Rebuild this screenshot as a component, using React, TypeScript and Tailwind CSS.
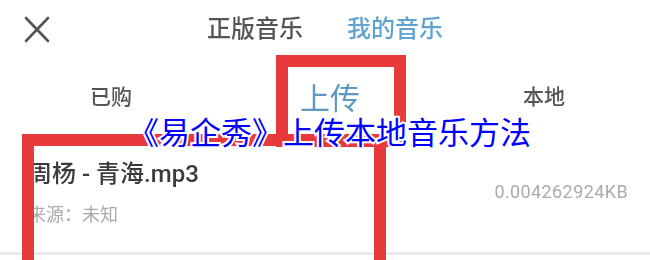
const sans = "font-['Roboto','Noto_Sans_CJK_SC',sans-serif]";

export default function App() {
  return (
    <div className={`relative h-[260px] w-[650px] overflow-hidden bg-white ${sans}`}>
      {/* Screenshot content, slightly soft like the source */}
      <div className="blur-[0.6px]">
        <header className="flex h-[58px] items-center pl-[24px]">
          <svg width="26" height="27" viewBox="0 0 26 27" className="text-[#555]" aria-hidden="true">
            <path d="M2 2 L24 25 M24 2 L2 25" stroke="currentColor" strokeWidth="2.6" strokeLinecap="round" />
          </svg>
          <span className="ml-[157px] text-[24px] font-medium leading-none text-[#555]">正版音乐</span>
          <span className="ml-[44px] text-[24px] font-medium leading-none text-[#5fa3d3]">我的音乐</span>
        </header>

        <div className="grid h-[80px] grid-cols-[222px_216px_212px] items-center text-center">
          <span className="text-[21px] font-medium text-[#555]">已购</span>
          <span className="text-[30px] text-[#5e97bf]">上传</span>
          <span className="text-[21px] font-medium text-[#555]">本地</span>
        </div>

        <div className="flex h-[117px] justify-between border-b-[3px] border-[#ececec] pl-[28px] pr-[22px]">
          <div className="pt-[20px]">
            <div className="text-[24px] font-medium leading-[32px] text-[#3a3a3a]">周杨 - 青海.mp3</div>
            <div className="mt-[13px] text-[18px] leading-[24px] text-[#aaa]">来源：未知</div>
          </div>
          <div className="pt-[42px] text-[18px] leading-[24px] tracking-[0.4px] text-[#aaa]">0.004262924KB</div>
        </div>
      </div>

      {/* Red annotation boxes */}
      <div className="absolute left-[276px] top-[55px] h-[92px] w-[130px] border-[12px] border-[#e8393b] blur-[0.4px]" />
      <div className="absolute left-[22px] top-[134px] h-[160px] w-[364px] border-[12px] border-[#e8393b] blur-[0.4px]" />

      {/* Article title overlay */}
      <div className="absolute left-[128px] top-[118px] text-[31px] leading-none text-[#0000ff] [paint-order:stroke_fill] [-webkit-text-stroke:4px_white]">
        《易企秀》上传本地音乐方法
      </div>
    </div>
  );
}
